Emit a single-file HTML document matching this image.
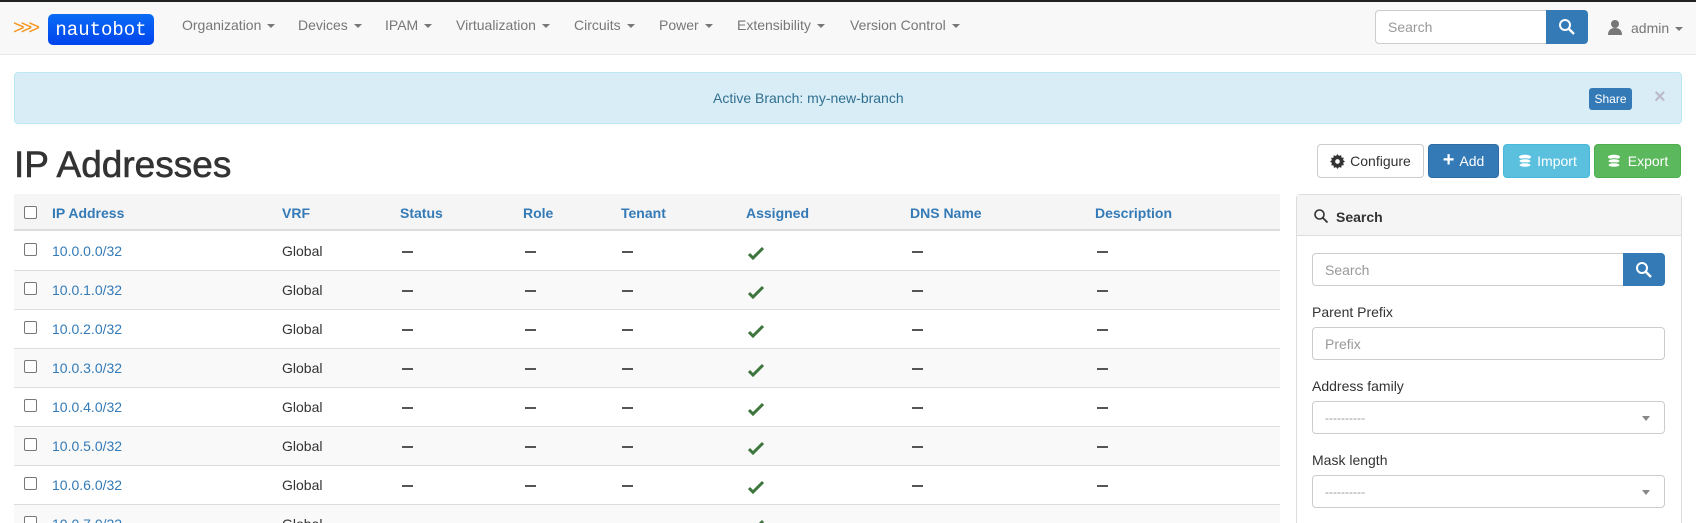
<!DOCTYPE html>
<html><head><meta charset="utf-8"><style>
*{box-sizing:border-box;margin:0;padding:0}
html,body{width:1696px;height:523px;overflow:hidden}
body{background:#fff;font-family:"Liberation Sans",Arial,sans-serif;font-size:14px;color:#333;position:relative}
.a{position:absolute}
.nav{left:0;top:0;width:1696px;height:55px;background:#f8f8f8;border-top:2px solid #222;border-bottom:1px solid #e7e7e7}
.ni{position:absolute;top:17px;color:#777;font-size:14px;white-space:nowrap}
.caret{display:inline-block;width:0;height:0;border-left:4px solid transparent;border-right:4px solid transparent;border-top:4px solid #777;vertical-align:middle;margin-left:6px}
.btn{position:absolute;top:144px;height:34px;border-radius:4px;color:#fff;font-size:14px;display:flex;align-items:center;justify-content:center;gap:5px}
.th{position:absolute;top:205px;font-weight:bold;color:#337ab7}
.cb{position:absolute;width:13px;height:13px;border:1px solid #777;border-radius:2px;background:#fff}
.inp{position:absolute;border:1px solid #ccc;border-radius:4px;background:#fff;color:#999;padding-left:12px;display:flex;align-items:center}
.lbl{position:absolute;left:1312px;color:#333}
</style></head><body>
<div class="a nav"></div>
<div class="a" style="left:13px;top:17px;color:#f7941d;font-size:20px;letter-spacing:-4px;font-family:'Liberation Sans',sans-serif">&gt;&gt;&gt;</div>
<div class="a" style="left:48px;top:14px;width:106px;height:31px;border-radius:5px;background:linear-gradient(#0a6cf5,#0044ee);color:#fff;font-family:'Liberation Mono',monospace;font-size:19px;display:flex;align-items:center;justify-content:center">nautobot</div>
<div class="ni" style="left:182px">Organization<span class="caret"></span></div>
<div class="ni" style="left:298px">Devices<span class="caret"></span></div>
<div class="ni" style="left:385px">IPAM<span class="caret"></span></div>
<div class="ni" style="left:456px">Virtualization<span class="caret"></span></div>
<div class="ni" style="left:574px">Circuits<span class="caret"></span></div>
<div class="ni" style="left:659px">Power<span class="caret"></span></div>
<div class="ni" style="left:737px">Extensibility<span class="caret"></span></div>
<div class="ni" style="left:850px">Version Control<span class="caret"></span></div>
<div class="inp" style="left:1375px;top:10px;width:174px;height:34px;border-radius:4px 0 0 4px">Search</div>
<div class="a" style="left:1546px;top:10px;width:42px;height:34px;background:#337ab7;border-radius:0 4px 4px 0"><svg width="42" height="34"><circle cx="19" cy="15" r="5" fill="none" stroke="#fff" stroke-width="2"/><path d="M23 19l5 5" stroke="#fff" stroke-width="2.4"/></svg></div>
<svg class="a" style="left:1607px;top:19px" width="16" height="16"><circle cx="8" cy="5" r="4" fill="#777"/><path d="M1 16c0-5 3-7 7-7s7 2 7 7z" fill="#777"/></svg>
<div class="ni" style="left:1631px;top:20px;color:#777">admin<span class="caret"></span></div>

<div class="a" style="left:14px;top:72px;width:1668px;height:52px;background:#d9edf7;border:1px solid #bce8f1;border-radius:4px"></div>
<div class="a" style="left:713px;top:90px;color:#31708f">Active Branch: my-new-branch</div>
<div class="a" style="left:1589px;top:88px;width:43px;height:22px;background:#337ab7;border-radius:3px;color:#fff;font-size:12px;display:flex;align-items:center;justify-content:center">Share</div>
<div class="a" style="left:1654px;top:86px;color:#bbc;font-size:20px;font-weight:bold">×</div>

<div class="a" style="left:14px;top:144px;font-size:37px;color:#333;-webkit-text-stroke:0.6px #333">IP Addresses</div>
<div class="btn" style="left:1317px;width:107px;background:#fff;border:1px solid #ccc;color:#333"><svg width="15" height="15" viewBox="0 0 16 16"><path d="M8 0l1.5 2 2.4-.8.3 2.5 2.5.3-.8 2.4L16 8l-2 1.5.8 2.4-2.5.3-.3 2.5-2.4-.8L8 16l-1.5-2-2.4.8-.3-2.5-2.5-.3.8-2.4L0 8l2-1.5-.8-2.4 2.5-.3.3-2.5 2.4.8z" fill="#333"/><circle cx="8" cy="8" r="2.5" fill="#fff"/></svg>Configure</div>
<div class="btn" style="left:1428px;width:71px;background:#337ab7;border:1px solid #2e6da4"><span style="font-size:20px;font-weight:bold;margin-top:-2px">+</span>Add</div>
<div class="btn" style="left:1503px;width:87px;background:#5bc0de;border:1px solid #46b8da"><svg width="16" height="14"><ellipse cx="9" cy="3" rx="6" ry="2.3" fill="#fff"/><ellipse cx="9" cy="7" rx="6" ry="2.3" fill="#fff" stroke="#5bc0de"/><ellipse cx="9" cy="11" rx="6" ry="2.3" fill="#fff" stroke="#5bc0de"/></svg>Import</div>
<div class="btn" style="left:1594px;width:87px;background:#5cb85c;border:1px solid #4cae4c"><svg width="16" height="14"><ellipse cx="7" cy="3" rx="6" ry="2.3" fill="#fff"/><ellipse cx="7" cy="7" rx="6" ry="2.3" fill="#fff" stroke="#5cb85c"/><ellipse cx="7" cy="11" rx="6" ry="2.3" fill="#fff" stroke="#5cb85c"/></svg>Export</div>

<div class="a" style="left:14px;top:194px;width:1266px;height:37px;background:#f5f5f5;border-bottom:2px solid #ddd"></div>
<div class="cb" style="left:24px;top:206px"></div>
<div class="th" style="left:52px">IP Address</div>
<div class="th" style="left:282px">VRF</div>
<div class="th" style="left:400px">Status</div>
<div class="th" style="left:523px">Role</div>
<div class="th" style="left:621px">Tenant</div>
<div class="th" style="left:746px">Assigned</div>
<div class="th" style="left:910px">DNS Name</div>
<div class="th" style="left:1095px">Description</div>
<div id="rows"></div>

<div class="a" style="left:1296px;top:194px;width:386px;height:329px;border:1px solid #ddd;border-bottom:none;border-radius:4px 4px 0 0"></div>
<div class="a" style="left:1297px;top:195px;width:384px;height:41px;background:#f5f5f5;border-bottom:1px solid #ddd"></div>
<svg class="a" style="left:1313px;top:208px" width="16" height="16"><circle cx="6.5" cy="6.5" r="4.5" fill="none" stroke="#333" stroke-width="1.6"/><path d="M10 10l4.5 4.5" stroke="#333" stroke-width="1.8"/></svg>
<div class="a" style="left:1336px;top:209px;font-weight:bold">Search</div>
<div class="inp" style="left:1312px;top:253px;width:312px;height:33px;border-radius:4px 0 0 4px">Search</div>
<div class="a" style="left:1623px;top:253px;width:42px;height:33px;background:#337ab7;border-radius:0 4px 4px 0"><svg width="42" height="33"><circle cx="19" cy="15" r="5" fill="none" stroke="#fff" stroke-width="2"/><path d="M23 19l5 5" stroke="#fff" stroke-width="2.4"/></svg></div>
<div class="lbl" style="top:304px">Parent Prefix</div>
<div class="inp" style="left:1312px;top:327px;width:353px;height:33px">Prefix</div>
<div class="lbl" style="top:378px">Address family</div>
<div class="inp" style="left:1312px;top:401px;width:353px;height:33px;color:#999;font-size:12px">----------<span style="position:absolute;right:14px;top:14px;border-left:4px solid transparent;border-right:4px solid transparent;border-top:5px solid #888"></span></div>
<div class="lbl" style="top:452px">Mask length</div>
<div class="inp" style="left:1312px;top:475px;width:353px;height:33px;color:#999;font-size:12px">----------<span style="position:absolute;right:14px;top:14px;border-left:4px solid transparent;border-right:4px solid transparent;border-top:5px solid #888"></span></div>

<script>
var h='';
for(var i=0;i<8;i++){
 var t=232+i*39;
 var hh=Math.min(39,523-t);
 h+='<div class="a" style="left:14px;top:'+t+'px;width:1266px;height:'+hh+'px;overflow:hidden;border-bottom:'+(hh<39?'none':'1px solid #ddd')+';background:'+(i%2?'#f9f9f9':'#fff')+'"></div>';
 var y=t+11;
 h+='<div class="a" style="left:0;top:0;width:1696px;height:523px;overflow:hidden;pointer-events:none"><div class="cb" style="left:24px;top:'+(t+11)+'px"></div>';
 h+='<div class="a" style="left:52px;top:'+y+'px;color:#337ab7">10.0.'+i+'.0/32</div>';
 h+='<div class="a" style="left:282px;top:'+y+'px">Global</div>';
 [402,525,622,912,1097].forEach(function(x){h+='<div class="a" style="left:'+x+'px;top:'+(t+19)+'px;width:11px;height:1.5px;background:#555"></div>';});
 h+='<svg class="a" style="left:748px;top:'+(t+14)+'px" width="16" height="14"><path d="M1 8l4 4 10-10" fill="none" stroke="#3c763d" stroke-width="3"/></svg></div>';
}
document.getElementById('rows').innerHTML=h;
</script>
</body></html>
